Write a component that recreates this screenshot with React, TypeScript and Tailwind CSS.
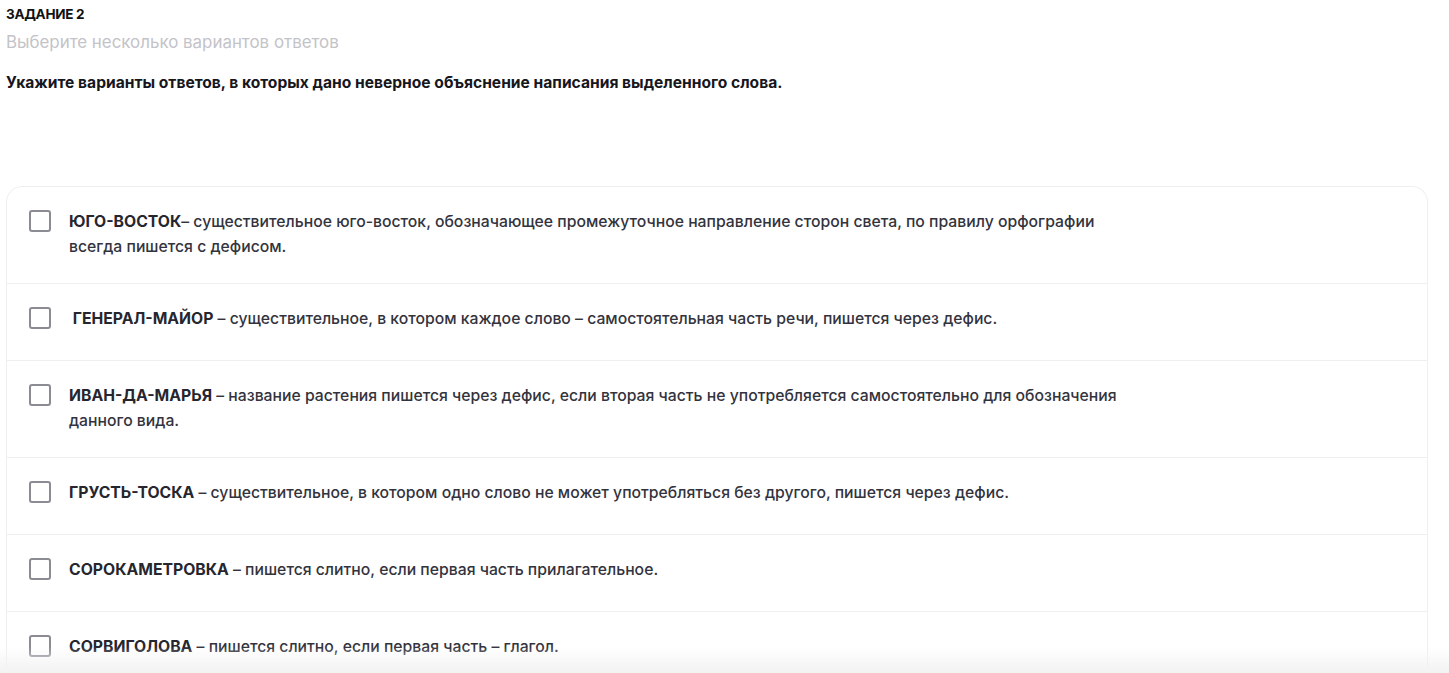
import React from 'react';

interface Option {
  word: string;
  dash: string;
  text: string;
}

const options: Option[] = [
  {
    word: 'ЮГО-ВОСТОК',
    dash: '– ',
    text: 'существительное юго-восток, обозначающее промежуточное направление сторон света, по правилу орфографии всегда пишется с дефисом.',
  },
  {
    word: '\u00a0ГЕНЕРАЛ-МАЙОР',
    dash: ' – ',
    text: 'существительное, в котором каждое слово – самостоятельная часть речи, пишется через дефис.',
  },
  {
    word: 'ИВАН-ДА-МАРЬЯ',
    dash: ' – ',
    text: 'название растения пишется через дефис, если вторая часть не употребляется самостоятельно для обозначения данного вида.',
  },
  {
    word: 'ГРУСТЬ-ТОСКА',
    dash: ' – ',
    text: 'существительное, в котором одно слово не может употребляться без другого, пишется через дефис.',
  },
  {
    word: 'СОРОКАМЕТРОВКА',
    dash: ' – ',
    text: 'пишется слитно, если первая часть прилагательное.',
  },
  {
    word: 'СОРВИГОЛОВА',
    dash: ' – ',
    text: 'пишется слитно, если первая часть – глагол.',
  },
];

export default function App() {
  return (
    <div className="min-h-screen bg-white pl-[6px] pr-[21px] pt-[6px] text-[#1c1c24] font-['Inter','Noto_Sans',sans-serif]">
      {/* Task header */}
      <div className="text-[13.5px] font-bold leading-[16px] tracking-[-0.3px] text-[#111]">ЗАДАНИЕ 2</div>
      <div className="mt-[10px] text-[16.9px] leading-[20px] text-[#c3c3c8]">Выберите несколько вариантов ответов</div>
      <div className="mt-[21px] text-[15.6px] font-bold leading-[20px] text-[#16161d]">
        Укажите варианты ответов, в которых дано неверное объяснение написания выделенного слова.
      </div>

      {/* Answer list */}
      <div className="mt-[93px] rounded-t-2xl border border-[#efeff1] border-b-0">
        {options.map((opt, i) => (
          <label
            key={i}
            className={`flex items-start gap-[18px] pl-[22px] pr-6 pt-[22px] pb-[24px] ${i > 0 ? 'border-t border-[#efeff1]' : ''}`}
          >
            <span className="flex h-[30px] shrink-0 items-start pt-[1px]">
              <span className="block h-[22px] w-[22px] rounded-[3px] border-2 border-[#8b8b94] bg-white" />
            </span>
            <span className="max-w-[1060px] text-[15.75px] font-medium leading-[25px] text-[#33333d]">
              <span className="font-bold text-[#26262f]">{opt.word}</span>
              {opt.dash}
              {opt.text}
            </span>
          </label>
        ))}
      </div>

      {/* bottom fade */}
      <div className="pointer-events-none fixed inset-x-0 bottom-0 h-[26px] bg-gradient-to-t from-[#f2f2f3] to-transparent" />
    </div>
  );
}
